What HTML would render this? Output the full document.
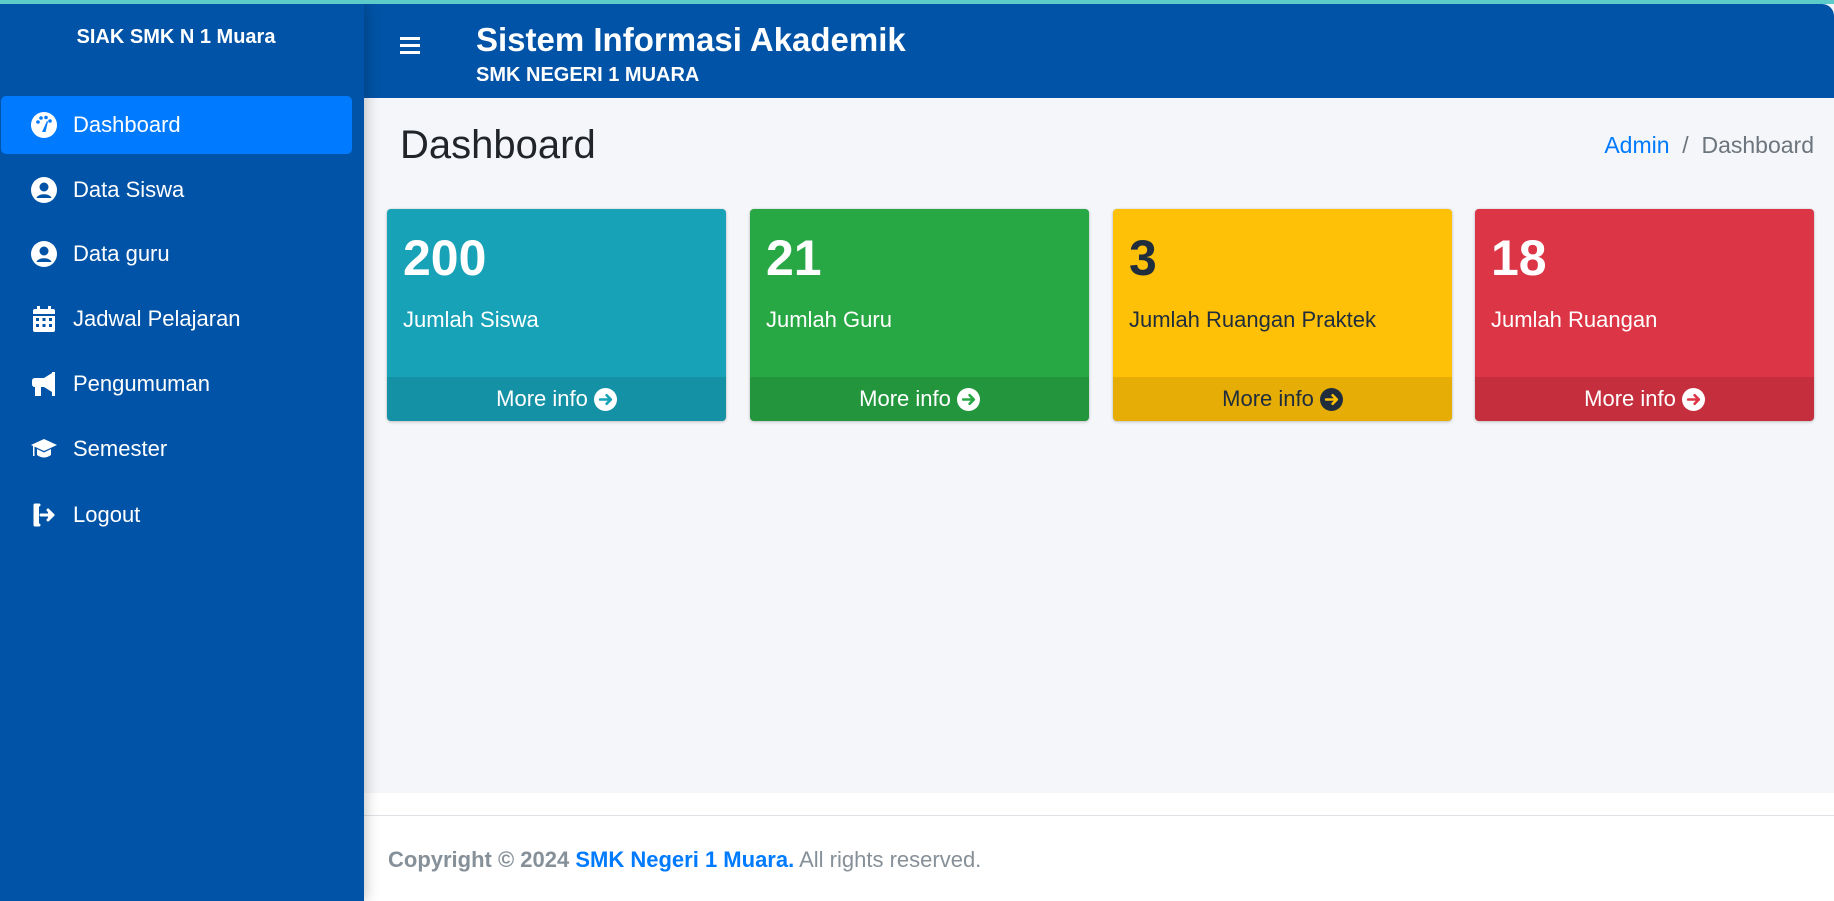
<!DOCTYPE html>
<html><head><meta charset="utf-8"><style>
*{box-sizing:border-box;margin:0;padding:0}
body{width:1834px;height:901px;overflow:hidden;background:#f4f6f9;font-family:"Liberation Sans",sans-serif;position:relative}
.topline{position:absolute;left:0;top:0;width:1834px;height:4px;background:#5ccbc9;z-index:5}
.side{position:absolute;left:0;top:4px;width:364px;height:897px;background:#0053a6;box-shadow:0 0 14px rgba(0,0,0,.3);z-index:3}
.brand{position:absolute;top:22px;left:0;width:352px;text-align:center;color:#fff;font-weight:bold;font-size:20px}
.item{position:absolute;left:1px;width:351px;height:58px;color:#fff;font-size:22px;display:flex;align-items:center;border-radius:5px}
.item.act{background:#007bff}
.item svg{position:absolute;left:29px;width:28px;height:28px;fill:#fff}
.item span{position:absolute;left:72px}
.head{position:absolute;left:364px;top:4px;width:1470px;height:94px;background:#0053a6;border-top-right-radius:12px;color:#fff}
.ham{position:absolute;left:36px;top:33px;width:20px;height:16px}
.ham i{display:block;height:3px;background:#fff;margin-bottom:4px}
.t1{position:absolute;left:112px;top:17px;font-size:33px;font-weight:bold}
.t2{position:absolute;left:112px;top:60px;font-size:20px;font-weight:bold}
h1{position:absolute;left:400px;top:123px;font-size:40px;font-weight:normal;color:#212529}
.bc{position:absolute;right:20px;top:132px;font-size:23px;color:#6c757d}
.bc a{color:#007bff}
.card{position:absolute;top:209px;width:339px;height:212px;border-radius:4px;box-shadow:0 0 1px rgba(0,0,0,.2),0 1px 3px rgba(0,0,0,.2);color:#fff;overflow:hidden}
.num{position:absolute;left:16px;top:20px;font-size:50px;font-weight:bold}
.lbl{position:absolute;left:16px;top:98px;font-size:22px}
.ft{position:absolute;left:0;bottom:0;width:100%;height:44px;background:rgba(0,0,0,.1);display:flex;align-items:center;justify-content:center;font-size:22px}
.ft .c{display:inline-block;width:23px;height:23px;border-radius:50%;margin-left:6px;position:relative}
.ft .c svg{position:absolute;left:4px;top:4px;width:15px;height:15px}
.footer{position:absolute;left:364px;top:793px;width:1470px;height:108px;background:#fff}
.footer .ln{position:absolute;top:22px;left:0;width:100%;height:1px;background:#dee2e6}
.footer p{position:absolute;left:24px;top:54px;font-size:22px;color:#869099}
.footer p b{color:#869099}
.footer p b.bl{color:#007bff}
</style></head><body>
<div class="topline"></div>
<div class="side">
<div class="brand">SIAK SMK N 1 Muara</div>
<div class="item act" style="top:92px"><svg viewBox="0 0 28 28"><circle cx="14" cy="14" r="13"/><g fill="#007bff"><circle cx="8" cy="11" r="1.8"/><circle cx="11" cy="7" r="1.8"/><circle cx="16" cy="6.5" r="1.8"/><circle cx="20" cy="10" r="1.8"/><path d="M12 21 L17 10 L18 10.5 L15.5 21 Z"/></g></svg><span>Dashboard</span></div>
<div class="item" style="top:157px"><svg viewBox="0 0 28 28"><circle cx="14" cy="14" r="13"/><circle cx="14" cy="11" r="4.5" fill="#0053a6"/><path d="M6.5 22 C8 17 20 17 21.5 22 Z" fill="#0053a6"/></svg><span>Data Siswa</span></div>
<div class="item" style="top:221px"><svg viewBox="0 0 28 28"><circle cx="14" cy="14" r="13"/><circle cx="14" cy="11" r="4.5" fill="#0053a6"/><path d="M6.5 22 C8 17 20 17 21.5 22 Z" fill="#0053a6"/></svg><span>Data guru</span></div>
<div class="item" style="top:286px"><svg viewBox="0 0 28 28"><rect x="7" y="1" width="3" height="5"/><rect x="18" y="1" width="3" height="5"/><rect x="3" y="4" width="22" height="23" rx="2"/><g fill="#0053a6"><rect x="3" y="9" width="22" height="2"/><rect x="6" y="13" width="3" height="3"/><rect x="12.5" y="13" width="3" height="3"/><rect x="19" y="13" width="3" height="3"/><rect x="6" y="19" width="3" height="3"/><rect x="12.5" y="19" width="3" height="3"/><rect x="19" y="19" width="3" height="3"/></g></svg><span>Jadwal Pelajaran</span></div>
<div class="item" style="top:351px"><svg viewBox="0 0 28 28"><path d="M22 2 L25 2 L25 26 L22 26 L22 22 L14 17 L11 17 L11 26 L5 26 L5 17 Q2 17 2 14 L2 11 Q2 8 5 8 L14 8 L22 3 Z"/></svg><span>Pengumuman</span></div>
<div class="item" style="top:416px"><svg viewBox="0 0 28 28"><path d="M14 4 L27 10 L14 16 L1 10 Z"/><path d="M7 14 L7 20 Q14 25 21 20 L21 14 L14 17.5 Z"/><rect x="3" y="11" width="1.5" height="10"/></svg><span>Semester</span></div>
<div class="item" style="top:482px"><svg viewBox="0 0 28 28" fill="none" stroke="#fff" stroke-width="3" stroke-linecap="round" stroke-linejoin="round"><path d="M9 4 L5 4 L5 24 L9 24"/><path d="M11 14 L23 14 M18 9 L23 14 L18 19"/></svg><span>Logout</span></div>
</div>
<div class="head"><div class="ham"><i></i><i></i><i></i></div><div class="t1">Sistem Informasi Akademik</div><div class="t2">SMK NEGERI 1 MUARA</div></div>
<h1>Dashboard</h1>
<div class="bc"><a>Admin</a>&nbsp;&nbsp;/&nbsp;&nbsp;Dashboard</div>

<div class="card" style="left:387px;background:#17a2b8"><div class="num">200</div><div class="lbl">Jumlah Siswa</div><div class="ft">More info<span class="c" style="background:#fff"><svg viewBox="0 0 14 14" fill="none" stroke="#17a2b8" stroke-width="2.4" stroke-linecap="round" stroke-linejoin="round"><path d="M2 7 L12 7 M8 3 L12 7 L8 11"/></svg></span></div></div>
<div class="card" style="left:750px;background:#28a745"><div class="num">21</div><div class="lbl">Jumlah Guru</div><div class="ft">More info<span class="c" style="background:#fff"><svg viewBox="0 0 14 14" fill="none" stroke="#28a745" stroke-width="2.4" stroke-linecap="round" stroke-linejoin="round"><path d="M2 7 L12 7 M8 3 L12 7 L8 11"/></svg></span></div></div>
<div class="card" style="left:1113px;background:#ffc107;color:#1f2d3d"><div class="num">3</div><div class="lbl">Jumlah Ruangan Praktek</div><div class="ft">More info<span class="c" style="background:#1f2d3d"><svg viewBox="0 0 14 14" fill="none" stroke="#ffc107" stroke-width="2.4" stroke-linecap="round" stroke-linejoin="round"><path d="M2 7 L12 7 M8 3 L12 7 L8 11"/></svg></span></div></div>
<div class="card" style="left:1475px;background:#dc3545"><div class="num">18</div><div class="lbl">Jumlah Ruangan</div><div class="ft">More info<span class="c" style="background:#fff"><svg viewBox="0 0 14 14" fill="none" stroke="#dc3545" stroke-width="2.4" stroke-linecap="round" stroke-linejoin="round"><path d="M2 7 L12 7 M8 3 L12 7 L8 11"/></svg></span></div></div>

<div class="footer"><div class="ln"></div><p><b>Copyright © 2024 </b><b class="bl">SMK Negeri 1 Muara.</b> All rights reserved.</p></div>
</body></html>
